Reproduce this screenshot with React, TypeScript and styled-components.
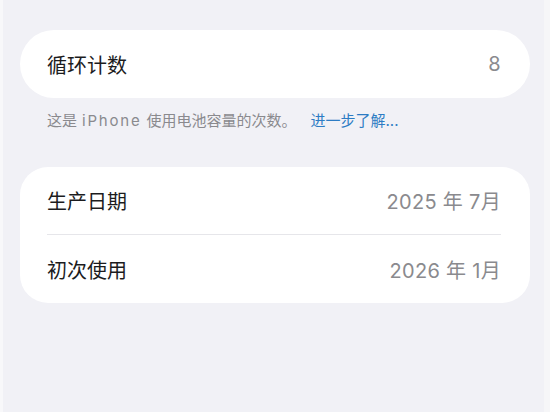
import React from "react";
import styled, { createGlobalStyle } from "styled-components";

const GlobalStyle = createGlobalStyle`
  html, body {
    margin: 0;
    padding: 0;
    background: #f2f2f7;
  }
  body {
    font-family: "Inter", "Noto Sans CJK SC", sans-serif;
    -webkit-font-smoothing: antialiased;
  }
`;

const Page = styled.div`
  width: 550px;
  height: 412px;
  box-sizing: border-box;
  padding: 30px 20px 0 20px;
  background: #f1f1f6;
  border-left: 3px solid #f8f8fa;
  border-right: 6px solid #f6f6f8;
  display: flex;
  flex-direction: column;
`;

const Card = styled.div<{ $radius: number }>`
  background: #ffffff;
  border-radius: ${(p) => p.$radius}px;
  padding: 0 29px 0 27px;
  margin-right: -6px;
  margin-left: -3px;
`;

const Row = styled.div<{ $divider?: boolean }>`
  height: 68px;
  display: flex;
  align-items: center;
  justify-content: space-between;
  box-sizing: border-box;
  border-bottom: ${(p) => (p.$divider ? "1.5px solid #e6e6ea" : "none")};
`;

const Label = styled.span`
  font-family: "Noto Sans CJK SC", sans-serif;
  font-size: 20px;
  color: #1c1c1e;
`;

const Value = styled.span`
  font-family: "Inter", "Noto Sans CJK SC", sans-serif;
  font-size: 20px;
  color: #8a8a8e;
  letter-spacing: 0.3px;
`;

const Footnote = styled.p`
  margin: 13px 0 0 24px;
  font-family: "Inter", "Noto Sans CJK SC", sans-serif;
  font-size: 15px;
  color: #8a8a8e;
  line-height: 20px;
`;

const Latin = styled.span`
  margin: 0 5px;
  letter-spacing: 1.8px;
`;

const Link = styled.span`
  color: #2d7cc4;
  margin-left: 14px;
`;

const Spacer = styled.div`
  height: 36px;
`;

export default function App() {
  return (
    <>
      <GlobalStyle />
      <Page>
        <Card $radius={34}>
          <Row>
            <Label>循环计数</Label>
            <Value>8</Value>
          </Row>
        </Card>
        <Footnote>
          这是<Latin>iPhone</Latin>使用电池容量的次数。<Link>进一步了解...</Link>
        </Footnote>
        <Spacer />
        <Card $radius={28}>
          <Row $divider>
            <Label>生产日期</Label>
            <Value>2025 年 7月</Value>
          </Row>
          <Row>
            <Label>初次使用</Label>
            <Value>2026 年 1月</Value>
          </Row>
        </Card>
      </Page>
    </>
  );
}
